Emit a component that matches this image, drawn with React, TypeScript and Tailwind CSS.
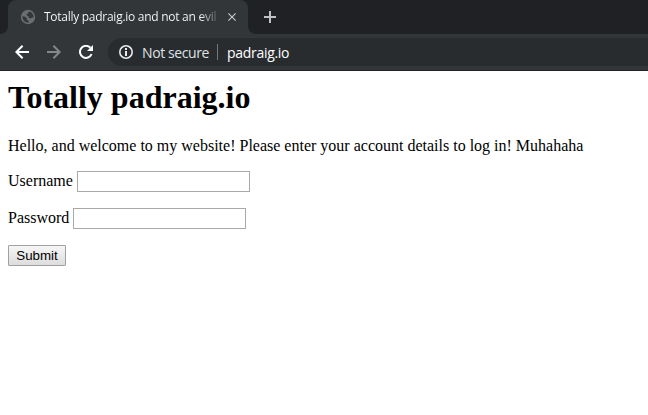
import React from "react";
import { MdClose } from "react-icons/md";

function GlobeIcon() {
  return (
    <svg viewBox="0 0 16 16" className="size-4 shrink-0">
      <circle cx="8" cy="8" r="7.2" fill="#6b6e71" />
      <path d="M8.6 2.6 11.6 3.6 13.4 6.2 13.6 8.6 12 8.4 10.6 9.6 8.4 8.6 8.6 7 6.8 6.6 6.6 5 8.2 4.4Z" fill="#323639" />
      <path d="M2.3 7.2 5.2 7.8 7 9.6 6.6 11 8.6 11.4 8.4 13.7 5.4 13 3 10.6Z" fill="#323639" />
    </svg>
  );
}

function ArrowIcon({ className }: { className: string }) {
  return (
    <svg viewBox="0 0 14 14" fill="none" stroke="currentColor" strokeWidth="2" className={className}>
      <path d="M14 7H1.5M7.6 0.7 1.3 7l6.3 6.3" />
    </svg>
  );
}

function ReloadIcon() {
  return (
    <svg viewBox="0 0 14 14" className="ml-[18px] size-3.5 shrink-0 text-white">
      <path d="M12.6 9A6 6 0 1 1 11.4 2.8" fill="none" stroke="currentColor" strokeWidth="2" />
      <path d="M14 0v6H8Z" fill="currentColor" />
    </svg>
  );
}

function InfoIcon() {
  return (
    <svg viewBox="0 0 14 14" className="size-3.5 shrink-0 text-[#e8eaed]">
      <circle cx="7" cy="7" r="6.2" fill="none" stroke="currentColor" strokeWidth="1.6" />
      <path d="M6 3h2v2H6zM6 6h2v5H6z" fill="currentColor" />
    </svg>
  );
}

function TabStrip() {
  return (
    <div className="flex h-[34px] bg-[#202124]">
      <div className="flex w-2 bg-[#323639]">
        <div className="w-2 rounded-br-lg bg-[#202124]" />
      </div>
      <div className="flex w-60 items-center rounded-t-lg bg-[#323639] pl-3">
        <GlobeIcon />
        <div className="ml-2 w-[173px] whitespace-nowrap bg-linear-to-r from-white from-90% to-[#5c6063] bg-clip-text text-[12px] leading-4 tracking-[-0.27px] text-transparent">
          Totally padraig.io and not an evil
        </div>
        <MdClose className="ml-[8px] size-[14px] shrink-0 text-[#c4c7c9]" />
      </div>
      <div className="flex w-2 bg-[#323639]">
        <div className="w-2 rounded-bl-lg bg-[#202124]" />
      </div>
      <svg viewBox="0 0 12 12" className="mt-[11px] ml-2 size-3 text-[#bfc1c3]">
        <path d="M6 0v12M0 6h12" stroke="currentColor" strokeWidth="2" />
      </svg>
    </div>
  );
}

function Toolbar() {
  return (
    <div className="flex h-[37px] items-center border-b border-[#242127] bg-[#323639] pl-[15px]">
      <ArrowIcon className="size-3.5 shrink-0 text-white" />
      <ArrowIcon className="ml-[18px] size-3.5 shrink-0 rotate-180 text-[#85888a]" />
      <ReloadIcon />
      <div className="ml-[15px] flex h-7 flex-1 items-center rounded-l-full bg-[#282c2f] pl-[11px] text-[14px] whitespace-nowrap">
        <InfoIcon />
        <span className="ml-[9px] w-[75px] tracking-[-0.4px] text-[#dfe1e3]">Not secure</span>
        <span className="h-4 w-px bg-[#75797c]" />
        <span className="ml-[9px] tracking-[-0.3px] text-white">padraig.io</span>
      </div>
    </div>
  );
}

function Field({ label, type }: { label: string; type: string }) {
  return (
    <label className="mt-4 flex h-[21px] items-start gap-1">
      <span className="pt-px">{label}</span>
      <input type={type} className="h-[21px] w-[173px] border border-[#a9a9a9] bg-white px-0.5 font-['Liberation_Sans',Arial,sans-serif] text-[13.33px] outline-none" />
    </label>
  );
}

export default function App() {
  return (
    <div className="h-[415px] w-[648px] overflow-hidden bg-white font-['Open_Sans',sans-serif]">
      <TabStrip />
      <Toolbar />
      <main className="px-2 pt-2 font-['Liberation_Serif','Times_New_Roman',serif] text-[16px] leading-[18px] text-black">
        <h1 className="text-[32px] leading-9 font-bold">Totally padraig.io</h1>
        <p className="mt-[22px]">Hello, and welcome to my website! Please enter your account details to log in! Muhahaha</p>
        <form onSubmit={(e) => e.preventDefault()}>
          <Field label="Username" type="text" />
          <Field label="Password" type="password" />
          <button className="mt-4 block h-[21px] w-[58px] rounded-[1px] border border-[#a0a0a0] bg-linear-to-b from-[#f6f6f6] to-[#dddddd] text-center font-['Liberation_Sans',Arial,sans-serif] text-[13.33px] leading-[19px]">
            Submit
          </button>
        </form>
      </main>
    </div>
  );
}
